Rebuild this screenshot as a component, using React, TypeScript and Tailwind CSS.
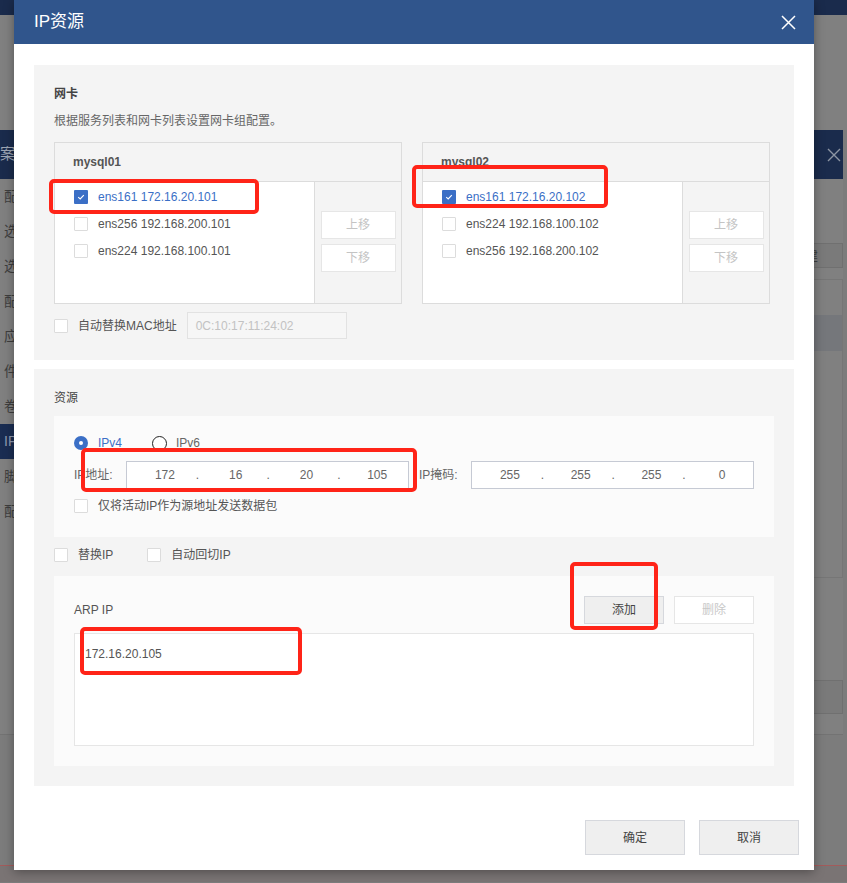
import React from "react";

const F = "font-['Liberation_Sans','Noto_Sans_CJK_SC',sans-serif]";

function Check({ checked = false }: { checked?: boolean }) {
  if (checked) {
    return (
      <span className="flex h-[14px] w-[14px] shrink-0 items-center justify-center rounded-[1px] bg-[#3b6fc6]">
        <svg width="10" height="10" viewBox="0 0 10 10">
          <polyline points="2.2,5.2 4.2,7 7.8,3.2" fill="none" stroke="#fff" strokeWidth="1.1" />
        </svg>
      </span>
    );
  }
  return <span className="h-[14px] w-[14px] shrink-0 rounded-[1px] border border-[#dcdcdc] bg-white" />;
}

function NicBox({ title, items }: { title: string; items: { t: string; c?: boolean }[] }) {
  return (
    <div className="flex h-[162px] w-[348px] flex-col border border-[#dcdcdc] bg-[#f4f4f4]">
      <div className="flex h-[39px] shrink-0 items-center border-b border-[#dcdcdc] pl-[18px] text-[12px] font-bold text-[#555]">
        {title}
      </div>
      <div className="flex flex-1">
        <div className="w-[260px] border-r border-[#dcdcdc] bg-white pt-[1px]">
          {items.map((it) => (
            <div key={it.t} className="flex h-[27px] items-center gap-[10px] pl-[19px]">
              <Check checked={it.c} />
              <span className={`text-[12px] ${it.c ? "text-[#3b6fc6]" : "text-[#555]"}`}>{it.t}</span>
            </div>
          ))}
        </div>
        <div className="flex flex-1 flex-col items-center gap-[5px] pt-[29px]">
          <div className="flex h-[28px] w-[75px] items-center justify-center border border-[#e6e6e6] bg-white text-[12px] text-[#c4c4c4]">上移</div>
          <div className="flex h-[28px] w-[75px] items-center justify-center border border-[#e6e6e6] bg-white text-[12px] text-[#c4c4c4]">下移</div>
        </div>
      </div>
    </div>
  );
}

function IpInput({ parts }: { parts: string[] }) {
  return (
    <div className="flex h-[28px] w-[283px] items-center border border-[#c6cad4] bg-white pl-[7px] text-[12px] text-[#666]">
      {parts.map((p, i) => (
        <React.Fragment key={i}>
          <span className="w-[62px] text-center">{p}</span>
          {i < 3 && <span className="w-[9px] text-left">.</span>}
        </React.Fragment>
      ))}
    </div>
  );
}

function Btn({ children, disabled = false, className = "" }: { children: React.ReactNode; disabled?: boolean; className?: string }) {
  return (
    <div
      className={`flex items-center justify-center border text-[12px] ${
        disabled ? "border-[#e6e6e6] bg-white text-[#c8c8c8]" : "border-[#d6d8dd] bg-[#efefef] text-[#444]"
      } ${className}`}
    >
      {children}
    </div>
  );
}

const Red = ({ l, t, w, h }: { l: number; t: number; w: number; h: number }) => (
  <div
    className="pointer-events-none absolute rounded-[5px] border-[4px] border-[#ff2418]"
    style={{ left: l, top: t, width: w, height: h }}
  />
);

export default function App() {
  const side = ["配", "选", "选", "配", "应", "件", "卷", "IP", "脚", "配"];
  return (
    <div className={`relative h-[883px] w-[847px] overflow-hidden bg-[#7c7c7c] ${F}`}>
      {/* page behind, dimmed */}
      <div className="h-[15px] bg-[#1a2b4c]" />
      <div className="h-[115px] bg-[#808080]" />
      <div className="flex h-[605px] w-[843px] flex-col border-b border-[#737373] bg-[#808080]">
        <div className="flex h-[49px] shrink-0 items-center justify-between bg-[#1a2b4c] pr-[2px]">
          <span className="text-[15px] text-[#9ea6b4]">案</span>
          <svg width="14" height="14" viewBox="0 0 14 14">
            <path d="M1 1L13 13M13 1L1 13" stroke="#8d95a3" strokeWidth="1.4" />
          </svg>
        </div>
        <div className="flex flex-1">
          <div className="w-[120px]">
            {side.map((s, i) => (
              <div
                key={i}
                className={`flex h-[35px] items-center pl-[4px] text-[14px] ${
                  s === "IP" ? "bg-[#1a2d52] text-[#8f9ab0]" : "text-[#3e3e3e]"
                }`}
              >
                {s}
              </div>
            ))}
          </div>
          <div className="flex flex-1 flex-col items-end pt-[64px]">
            <div className="flex h-[25px] w-[90px] items-center justify-end border border-[#707070] bg-[#7a7a7a] pr-[24px] text-[13px] text-[#3e3e3e]">建</div>
            <div className="mt-[11px] h-[299px] w-[120px] border border-[#767676]">
              <div className="mt-[35px] h-[36px] bg-[#75777b]" />
            </div>
            <div className="mt-[102px] h-[34px] w-[120px] border border-[#707070] bg-[#7a7a7a]" />
          </div>
        </div>
      </div>
      <div className="h-[130px]" />
      <div className="h-px bg-[#a35b5b]" />
      <div className="h-[16px] bg-[#7a7474]" />

      {/* dialog */}
      <div className="absolute left-[14px] top-0 flex h-[870px] w-[800px] flex-col bg-white shadow-[0_2px_10px_rgba(0,0,0,0.35)]">
        <div className="flex h-[44px] shrink-0 items-center justify-between bg-[#30558c] pl-[20px] pr-[18px]">
          <span className="text-[17px] text-white">IP资源</span>
          <svg width="15" height="15" viewBox="0 0 15 15">
            <path d="M1 1L14 14M14 1L1 14" stroke="#fff" strokeWidth="1.5" />
          </svg>
        </div>
        <div className="flex flex-col px-[20px] pt-[21px]">
          {/* 网卡 */}
          <div className="flex h-[295px] flex-col bg-[#f4f4f4] px-[20px] pt-[20px]">
            <div className="h-[18px] text-[12px] font-bold leading-[18px] text-[#444]">网卡</div>
            <div className="mt-[9px] h-[18px] text-[12px] leading-[18px] text-[#666]">根据服务列表和网卡列表设置网卡组配置。</div>
            <div className="mt-[12px] flex gap-[20px]">
              <NicBox
                title="mysql01"
                items={[
                  { t: "ens161 172.16.20.101", c: true },
                  { t: "ens256 192.168.200.101" },
                  { t: "ens224 192.168.100.101" },
                ]}
              />
              <NicBox
                title="mysql02"
                items={[
                  { t: "ens161 172.16.20.102", c: true },
                  { t: "ens224 192.168.100.102" },
                  { t: "ens256 192.168.200.102" },
                ]}
              />
            </div>
            <div className="mt-[8px] flex h-[27px] items-center">
              <Check />
              <span className="ml-[10px] text-[12px] text-[#555]">自动替换MAC地址</span>
              <div className="ml-[10px] flex h-[27px] w-[160px] items-center border border-[#e2e2e2] bg-[#f6f6f6] pl-[8px] text-[12px] text-[#c2c2c2]">
                0C:10:17:11:24:02
              </div>
            </div>
          </div>

          {/* 资源 */}
          <div className="mt-[9px] flex h-[417px] flex-col bg-[#f4f4f4] px-[20px] pt-[20px]">
            <div className="h-[18px] text-[12px] leading-[18px] text-[#444]">资源</div>
            <div className="mt-[9px] flex h-[121px] flex-col bg-[#fbfbfb] px-[20px] pt-[18px]">
              <div className="flex h-[18px] items-center text-[12px]">
                <span className="flex h-[14px] w-[14px] items-center justify-center rounded-full bg-[#3b6fc6]">
                  <span className="h-[4px] w-[4px] rounded-full bg-white" />
                </span>
                <span className="ml-[10px] text-[#3b6fc6]">IPv4</span>
                <span className="ml-[30px] h-[15px] w-[15px] rounded-full border border-[#222] bg-white" />
                <span className="ml-[9px] text-[#666]">IPv6</span>
              </div>
              <div className="mt-[9px] flex h-[28px] items-center text-[12px] text-[#666]">
                <span className="w-[52px]">IP地址:</span>
                <IpInput parts={["172", "16", "20", "105"]} />
                <span className="ml-[10px] w-[52px]">IP掩码:</span>
                <IpInput parts={["255", "255", "255", "0"]} />
              </div>
              <div className="mt-[8px] flex h-[18px] items-center gap-[10px] text-[12px] text-[#555]">
                <Check />
                <span>仅将活动IP作为源地址发送数据包</span>
              </div>
            </div>
            <div className="mt-[9px] flex h-[18px] items-center text-[12px] text-[#555]">
              <Check />
              <span className="ml-[10px]">替换IP</span>
              <span className="ml-[34px]" />
              <Check />
              <span className="ml-[10px]">自动回切IP</span>
            </div>
            <div className="mt-[12px] flex h-[190px] flex-col bg-[#fbfbfb] px-[20px] pt-[20px]">
              <div className="flex h-[28px] items-center justify-between">
                <span className="text-[12px] text-[#555]">ARP IP</span>
                <div className="flex gap-[10px]">
                  <Btn className="h-[28px] w-[80px]">添加</Btn>
                  <Btn disabled className="h-[28px] w-[80px]">删除</Btn>
                </div>
              </div>
              <div className="mt-[9px] h-[113px] border border-[#e6e6e6] bg-white pl-[10px] pt-[11px] text-[12px] leading-[18px] text-[#555]">
                172.16.20.105
              </div>
            </div>
          </div>
        </div>
        <div className="mt-[34px] flex justify-end gap-[14px] pr-[15px]">
          <Btn className="h-[35px] w-[100px]">确定</Btn>
          <Btn className="h-[35px] w-[100px]">取消</Btn>
        </div>
      </div>

      {/* annotation boxes */}
      <Red l={49} t={179} w={210} h={35} />
      <Red l={412} t={165} w={196} h={43} />
      <Red l={81} t={448} w={336} h={44} />
      <Red l={570} t={562} w={88} h={68} />
      <Red l={80} t={627} w={222} h={48} />
    </div>
  );
}
